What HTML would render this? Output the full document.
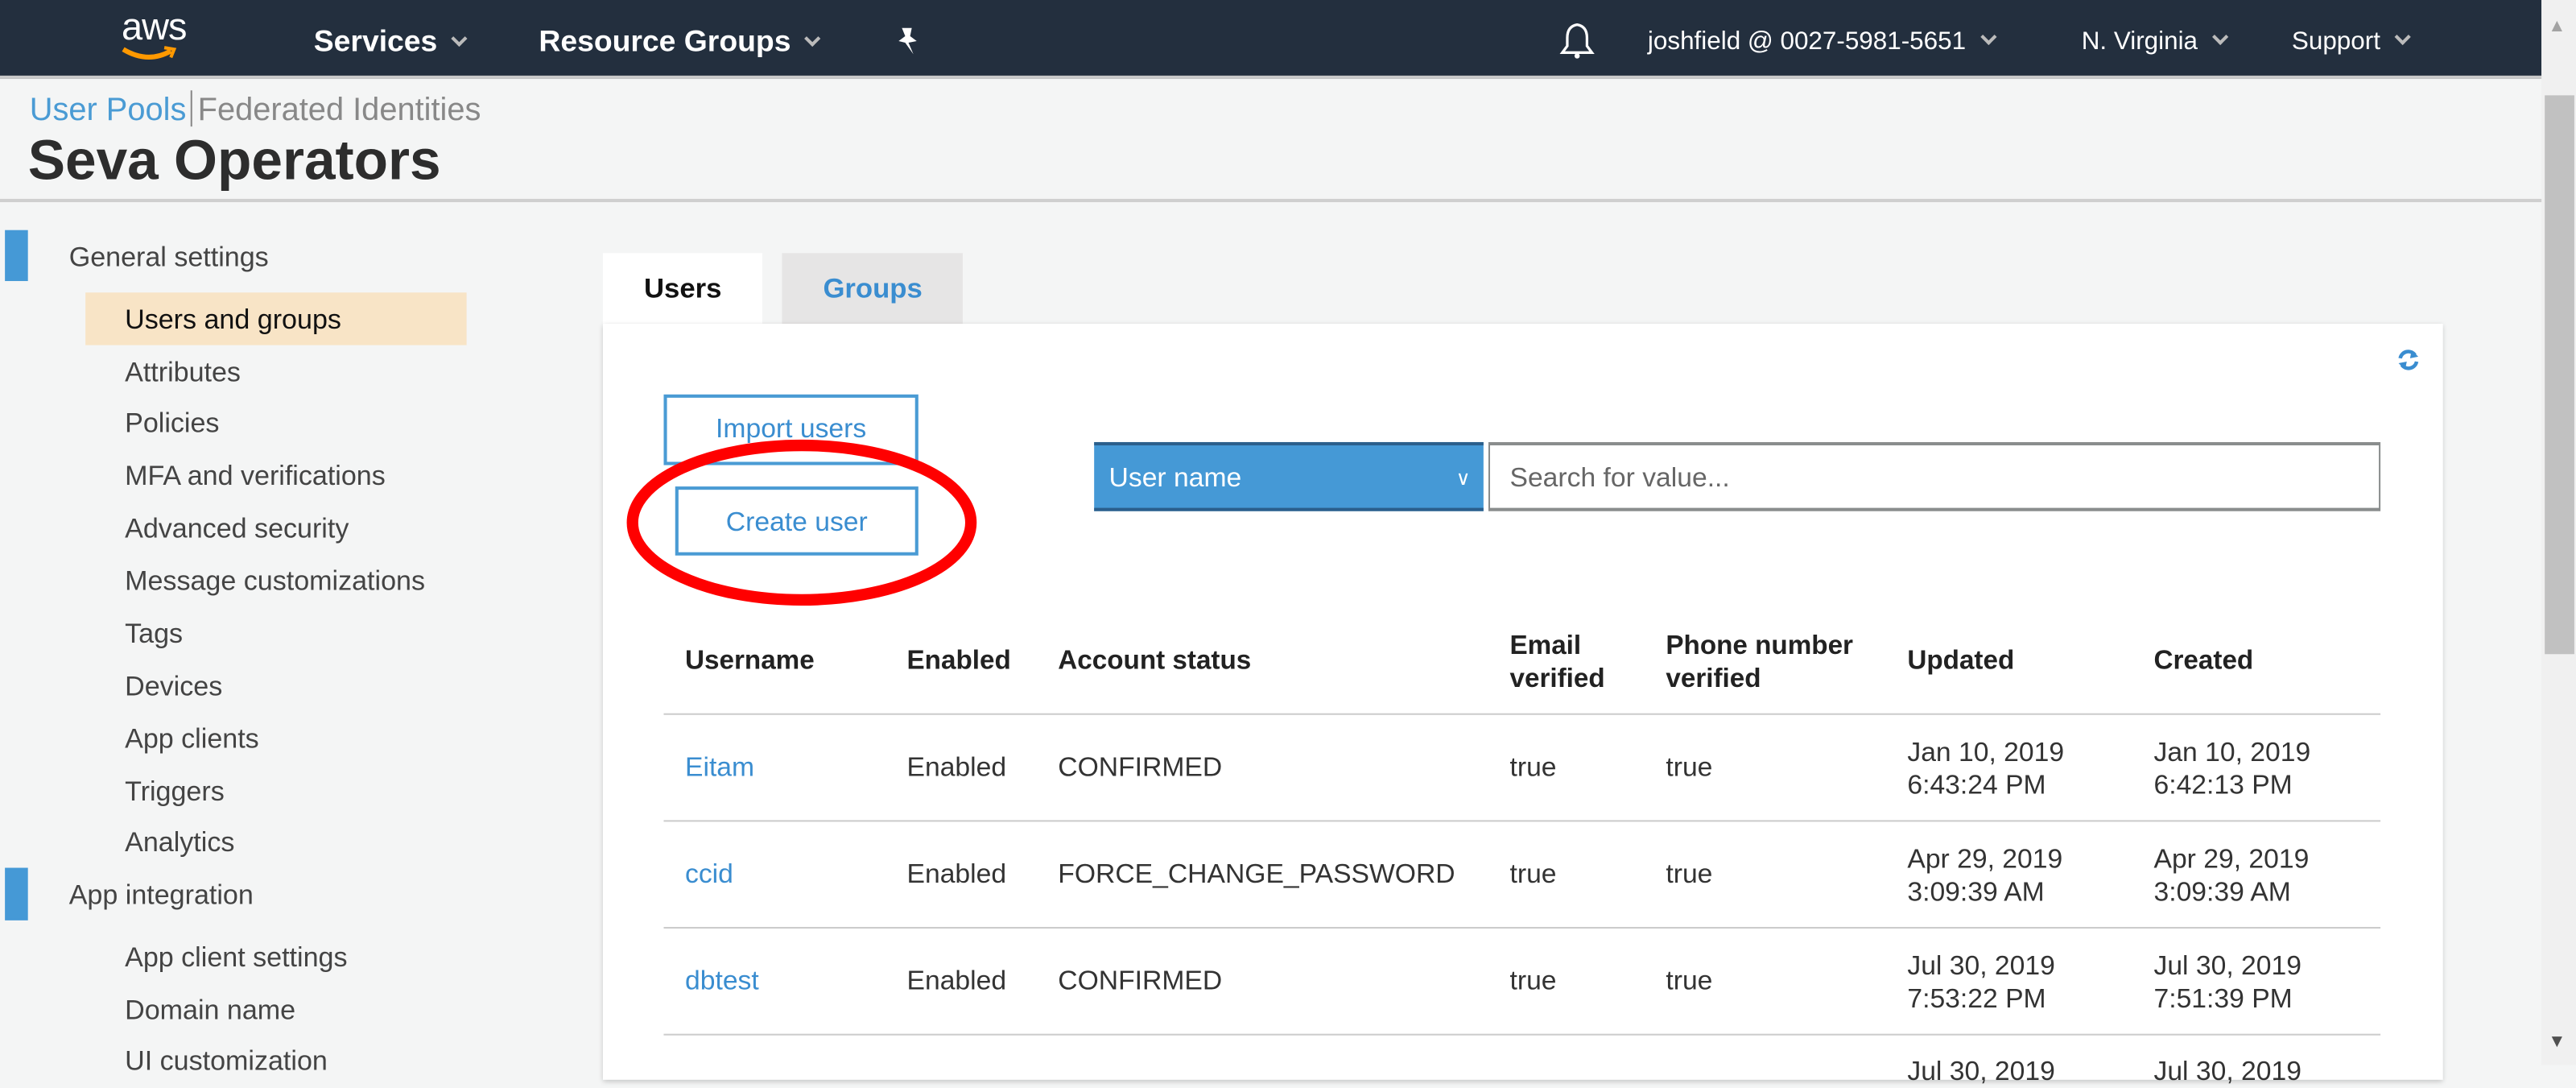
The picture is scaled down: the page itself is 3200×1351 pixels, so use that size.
<!DOCTYPE html>
<html><head><meta charset="utf-8"><style>
*{margin:0;padding:0;box-sizing:border-box}
html,body{width:3200px;height:1323px;overflow:hidden;background:#f4f5f5}
#w{position:absolute;left:0;top:0;width:1568px;height:648px;transform:scale(2.0408);transform-origin:0 0;font-family:"Liberation Sans",Arial,sans-serif;color:#333}
.a{position:absolute;white-space:nowrap}
.top{position:absolute;left:0;top:0;width:1547px;height:48px;background:#232f3e;border-bottom:2px solid #c9c9c9}
.nav{color:#fff;font-size:18.3px;font-weight:bold;top:14px}
.nr{color:#fff;font-size:15.4px;top:17px}
.car{display:inline-block;width:7px;height:7px;border-right:2px solid #bbb;border-bottom:2px solid #bbb;transform:rotate(45deg);vertical-align:4px;margin-left:10px}
.side{font-size:16.7px;color:#444;left:76px}
.th{font-weight:bold;font-size:16.3px;color:#222}
.td{font-size:16.5px;color:#333}
.lk{color:#3a8dd0}
.hl{position:absolute;left:404px;width:1045px;height:1px;background:#ccc}
</style></head><body><div id="w">
<div class="top"></div>
<div class="a" style="left:74px;top:3px;color:#fff;font-size:23px;letter-spacing:-0.5px">aws</div>
<svg class="a" style="left:73px;top:27px" width="36" height="12"><path d="M2 3 Q17 12 31 4" stroke="#f90" stroke-width="3" fill="none"/><path d="M27 2 L33 3 L31 8" stroke="#f90" stroke-width="2" fill="none"/></svg>
<div class="a nav" style="left:191px">Services<span class="car"></span></div>
<div class="a nav" style="left:328px">Resource Groups<span class="car"></span></div>
<svg class="a" style="left:545px;top:15px" width="16" height="20"><path d="M4 2 L10 2 L9 7 L13 10 L8 11 L11 18 L6 11 L2 10 L6 7 Z" fill="#fff"/></svg>
<svg class="a" style="left:949px;top:13px" width="22" height="24"><path d="M11 2 Q5 3 5 10 L5 15 L2 19 L20 19 L17 15 L17 10 Q17 3 11 2 Z" stroke="#fff" stroke-width="1.6" fill="none"/><circle cx="11" cy="21" r="1.6" fill="#fff"/></svg>
<div class="a nr" style="left:1003px">joshfield @ 0027-5981-5651<span class="car"></span></div>
<div class="a nr" style="left:1267px">N. Virginia<span class="car"></span></div>
<div class="a nr" style="left:1395px">Support<span class="car"></span></div>
<div class="a" style="left:1547px;top:0;width:21px;height:648px;background:#f0f0f0"></div>
<div class="a" style="left:1549px;top:58px;width:18px;height:340px;background:#c1c1c1"></div>
<div class="a" style="left:1551px;top:10px;color:#a3a3a3;font-size:11px">&#9650;</div>
<div class="a" style="left:1551px;top:628px;color:#505050;font-size:11px">&#9660;</div>

<div class="a" style="left:18px;top:55px;font-size:19.5px"><span class="lk" style="color:#4a9bd4">User Pools</span><span style="display:inline-block;width:1px;height:22px;background:#888;margin:0 3px;vertical-align:-4px"></span><span style="color:#888">Federated Identities</span></div>
<div class="a" style="left:17px;top:79px;font-size:34px;font-weight:bold;color:#2d2d2d">Seva Operators</div>
<div class="a" style="left:0;top:121px;width:1547px;height:2px;background:#cfcfcf"></div>

<div class="a" style="left:3px;top:140px;width:14px;height:31px;background:#4599d6"></div>
<div class="a" style="left:3px;top:528px;width:14px;height:32px;background:#4599d6"></div>
<div class="a" style="left:52px;top:178px;width:232px;height:32px;background:#f8e4c6"></div>
<div class="a side" style="left:42px;top:147px">General settings</div>
<div class="a side" style="top:185px;color:#111">Users and groups</div>
<div class="a side" style="top:217px">Attributes</div>
<div class="a side" style="top:248px">Policies</div>
<div class="a side" style="top:280px">MFA and verifications</div>
<div class="a side" style="top:312px">Advanced security</div>
<div class="a side" style="top:344px">Message customizations</div>
<div class="a side" style="top:376px">Tags</div>
<div class="a side" style="top:408px">Devices</div>
<div class="a side" style="top:440px">App clients</div>
<div class="a side" style="top:472px">Triggers</div>
<div class="a side" style="top:503px">Analytics</div>
<div class="a side" style="left:42px;top:535px">App integration</div>
<div class="a side" style="top:573px">App client settings</div>
<div class="a side" style="top:605px">Domain name</div>
<div class="a side" style="top:636px">UI customization</div>

<div class="a" style="left:367px;top:154px;width:97px;height:44px;background:#fff"></div>
<div class="a" style="left:476px;top:154px;width:110px;height:43px;background:#e6e5e5"></div>
<div class="a" style="left:392px;top:166px;font-size:17px;font-weight:bold;color:#111">Users</div>
<div class="a" style="left:501px;top:166px;font-size:17px;font-weight:bold;color:#3a8dd0">Groups</div>
<div class="a" style="left:367px;top:197px;width:1120px;height:460px;background:#fff;box-shadow:0 1px 3px rgba(0,0,0,.2)"></div>
<svg class="a" style="left:1458px;top:211px" width="16" height="16"><path d="M3 7 A5 5 0 0 1 12 5" stroke="#3a8dd0" stroke-width="2.2" fill="none"/><path d="M10 2 L14 6 L9 7 Z" fill="#3a8dd0"/><path d="M13 9 A5 5 0 0 1 4 11" stroke="#3a8dd0" stroke-width="2.2" fill="none"/><path d="M6 14 L2 10 L7 9 Z" fill="#3a8dd0"/></svg>

<div class="a" style="left:404px;top:240px;width:155px;height:43px;border:2px solid #4a9bd4;text-align:center;line-height:39px;font-size:16.5px;color:#3a8dd0">Import users</div>
<div class="a" style="left:411px;top:296px;width:148px;height:42px;border:2px solid #4a9bd4;text-align:center;line-height:40px;font-size:16.5px;color:#3a8dd0;background:#fff">Create user</div>
<svg class="a" style="left:378px;top:265px" width="222" height="108"><ellipse cx="110" cy="53" rx="103" ry="47" stroke="#f00" stroke-width="7" fill="none"/></svg>

<div class="a" style="left:666px;top:269px;width:237px;height:42px;background:#4599d6;border-top:2px solid #2b5f8c;border-bottom:2px solid #2b5f8c;color:#fff;font-size:16.5px;line-height:40px;padding-left:9px">User name<span style="position:absolute;right:8px;font-size:12px">&#8744;</span></div>
<div class="a" style="left:906px;top:269px;width:543px;height:42px;border:2px solid #8a8d8d;border-left-width:1px;border-right-width:1px;color:#666;font-size:16.5px;line-height:40px;padding-left:12px">Search for value...</div>

<div class="a th" style="left:417px;top:393px">Username</div>
<div class="a th" style="left:552px;top:393px">Enabled</div>
<div class="a th" style="left:644px;top:393px">Account status</div>
<div class="a th" style="left:919px;top:383px;line-height:20px">Email<br>verified</div>
<div class="a th" style="left:1014px;top:383px;line-height:20px">Phone number<br>verified</div>
<div class="a th" style="left:1161px;top:393px">Updated</div>
<div class="a th" style="left:1311px;top:393px">Created</div>
<div class="hl" style="top:434px"></div>
<div class="hl" style="top:499px"></div>
<div class="hl" style="top:564px"></div>
<div class="hl" style="top:629px"></div>

<div class="a td lk" style="left:417px;top:458px">Eitam</div>
<div class="a td" style="left:552px;top:458px">Enabled</div>
<div class="a td" style="left:644px;top:458px">CONFIRMED</div>
<div class="a td" style="left:919px;top:458px">true</div>
<div class="a td" style="left:1014px;top:458px">true</div>
<div class="a td" style="left:1161px;top:448px;line-height:20px">Jan 10, 2019<br>6:43:24 PM</div>
<div class="a td" style="left:1311px;top:448px;line-height:20px">Jan 10, 2019<br>6:42:13 PM</div>

<div class="a td lk" style="left:417px;top:523px">ccid</div>
<div class="a td" style="left:552px;top:523px">Enabled</div>
<div class="a td" style="left:644px;top:523px">FORCE_CHANGE_PASSWORD</div>
<div class="a td" style="left:919px;top:523px">true</div>
<div class="a td" style="left:1014px;top:523px">true</div>
<div class="a td" style="left:1161px;top:513px;line-height:20px">Apr 29, 2019<br>3:09:39 AM</div>
<div class="a td" style="left:1311px;top:513px;line-height:20px">Apr 29, 2019<br>3:09:39 AM</div>

<div class="a td lk" style="left:417px;top:588px">dbtest</div>
<div class="a td" style="left:552px;top:588px">Enabled</div>
<div class="a td" style="left:644px;top:588px">CONFIRMED</div>
<div class="a td" style="left:919px;top:588px">true</div>
<div class="a td" style="left:1014px;top:588px">true</div>
<div class="a td" style="left:1161px;top:578px;line-height:20px">Jul 30, 2019<br>7:53:22 PM</div>
<div class="a td" style="left:1311px;top:578px;line-height:20px">Jul 30, 2019<br>7:51:39 PM</div>
<div class="a td" style="left:1161px;top:643px">Jul 30, 2019</div>
<div class="a td" style="left:1311px;top:643px">Jul 30, 2019</div>
</div></body></html>
